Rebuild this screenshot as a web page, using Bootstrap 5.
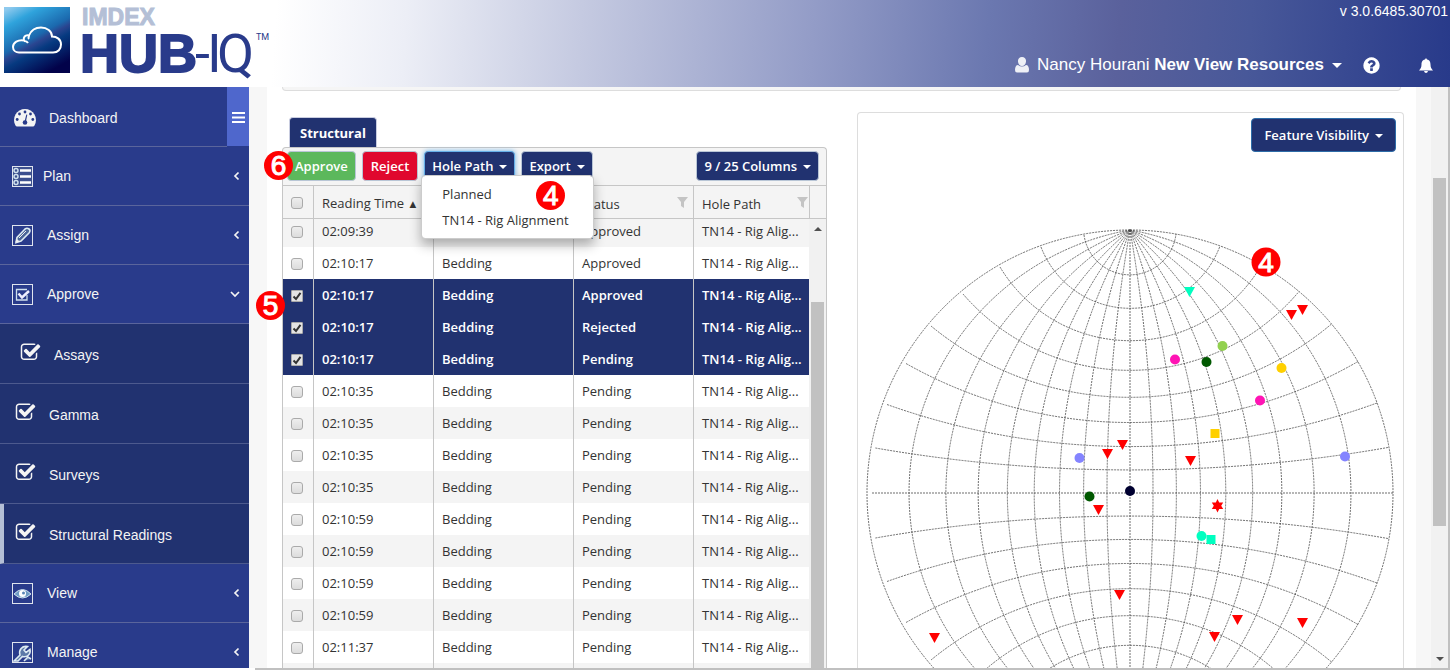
<!DOCTYPE html>
<html lang="en">
<head>
<meta charset="utf-8">
<meta name="viewport" content="width=device-width, initial-scale=1">
<title>IMDEX HUB-IQ - Structural Readings</title>
<link href="https://cdn.jsdelivr.net/npm/bootstrap@5.3.0/dist/css/bootstrap.min.css" rel="stylesheet">
<style>
:root{--navy:#213270;--blue:#293b8b;--line:#c6c6c6}
body{font-family:"Open Sans","Noto Sans",sans-serif;font-size:13px;line-height:20px;color:#333;background:#fff}
.arial{font-family:"Liberation Sans",Arial,sans-serif}
.min-h0{min-height:0}
.min-w0{min-width:0}
/* header */
.topbar{height:87px;background:linear-gradient(94deg,#fff 19%,#eceef6 28%,#c5cae1 40%,#939cc7 56%,#6b78b0 68%,#5a619c 77%,#485899 86%,#283a8a 100%);color:#fff;flex:none}
.version{font-size:14px;line-height:16px;padding:3px 2px 0 0}
.userbar{font-size:17px;line-height:20px;padding:36px 17px 0 0}
.userbar a{color:#fff;text-decoration:none}
.nbtn.dropdown-toggle::after{border-top-width:4px;border-left-width:4px;border-right-width:4px;vertical-align:2px;margin-left:6px}
.userbar .dropdown-toggle::after{border-top-width:5px;border-left-width:5px;border-right-width:5px;vertical-align:2px;margin-left:8px}
.helplink{margin-left:20px}
.belllink{margin-left:38px}
/* sidebar */
.side{width:249px;background:var(--blue);flex:none;font-size:14px}
.side a{display:flex;align-items:center;color:#f4f4f4;text-decoration:none;height:59px;border-bottom:1px solid #5a659c;padding:0 9px 0 12px;flex:none}
.side a svg{flex:none;margin-right:14px}
.side a .chev{margin:0 0 0 auto}
.side .dash{height:60px;padding:2px 0 0 14px}
.side .dash svg{margin-right:13px}
.side .plan svg:first-child{margin-right:10px}
.side .sub a{height:60px;background:var(--navy);padding:3px 0 0 15px;border-color:#4d5a8e}
.side .sub .deep{padding-left:20px}
.side .sub .on{border-left:4px solid #b4bfd6;padding-left:11px}
.side .sub svg{margin:-5px 13px 0 0}
.burger{width:22px;height:59px;background:#4f67cc;border:0;padding:0}
/* content */
.gutter{background:#f7f7f7;padding:0 15px 0 18px}
.sheet{padding:0 12px 0 15px}
.strip{height:4px;background:#f5f5f5;border:1px solid #ddd;border-top:0;border-radius:0 0 4px 4px;margin-right:3px;flex:none}
.side-cols{gap:30px}
.left-col{flex:1 1 545px;min-width:0;padding-top:26px}
.right-col{flex:1 1 547px;min-width:0}
.tabbtn{background:var(--navy);color:#fff;font-weight:700;border:1px solid #c9cde0;border-bottom:0;border-radius:4px 4px 0 0;height:30px;margin-left:7px;padding:0 10px;display:block}
.grid-box{border:1px solid var(--line);border-bottom:0;border-radius:4px 4px 0 0;background:#f4f4f4}
.tools{height:37px;padding:3px 7px 0 4px;gap:6px}
.nbtn{height:30px;padding:0 7px;font-size:13px;line-height:20px;font-weight:600;color:#fff;border-radius:4px;border:1px solid #b9c6d6}
.nbtn:hover{color:#fff}
.navyb,.navyb:hover,.navyb.show{background:var(--navy)!important;color:#fff!important}
.greenb{background:#5cb85c}
.redb{background:#e0082e;padding:0 8px}
.glow{border-color:#66afe9!important;box-shadow:0 0 5px #66afe9}
.feature{height:34px;padding:0 12px;border-color:#2d6ca8}
.pathmenu{min-width:173px;top:24px;left:-3px;padding:5px 0;border-radius:4px;box-shadow:0 6px 12px rgba(0,0,0,.3);font-size:13px;border-color:#ccc}
.pathmenu .dropdown-item{padding:3px 20px;color:#333}
.kg{table-layout:fixed;width:100%;margin:0;border-collapse:separate;border-spacing:0}
.kg th,.kg td{padding:0 0 0 8px;height:32px;border-left:1px solid var(--line);white-space:nowrap;font-weight:400;vertical-align:middle}
.kg th:first-child,.kg td:first-child{border-left:0}
.kg thead th{height:34px;border-top:1px solid var(--line);border-bottom:1px solid var(--line);padding-top:3px}
.kg tbody tr{background:#fff}
.kg tbody tr:nth-child(odd){background:#f4f4f4}
.kg tbody tr.sel{background:var(--navy);color:#fff}
.kg tbody tr.sel td{font-weight:600}
.c1{width:30px}.c2{width:120px}.c3{width:140px}.c4{width:120px}.c6{width:17px}
.rows{flex:1;min-height:0;overflow:hidden}
.rows table{margin-top:-4px}
.kg input{appearance:none;display:block;width:12px;height:12px;margin:2px 0 0 0;border:1px solid #aaa;border-radius:3px;background:linear-gradient(#eee,#dcdcdc)}
.kg thead input{margin-top:-2px}
.kg input:checked{border-radius:1px;background:#e4e4e4 url("data:image/svg+xml,%3Csvg xmlns='http://www.w3.org/2000/svg' viewBox='0 0 10 10'%3E%3Cpath d='M1.500 5.500 4 8 8.500 1.800' fill='none' stroke='%23333' stroke-width='2'/%3E%3C/svg%3E") center/10px no-repeat}
.filt{float:right;margin:3px 5px 0 0}
.filt-end{margin-right:1px}
.vtrack{width:17px;background:#f1f1f1;flex:none}
.uparrow{border:4px solid transparent;border-top:0;border-bottom-color:#505050;margin-top:8px}
.vthumb{width:13px;background:#c1c1c1;flex:1;margin-top:71px}
.plotbox{border:1px solid #ddd;border-bottom:0;border-radius:4px 4px 0 0;margin-top:21px;padding:5px 7px 0 8px;overflow:hidden}
.plot{margin-top:77px;flex:none}
.pagebar{width:19px;background:#f1f1f1;border-right:2px solid #c0c0c0;flex:none}
.pagethumb{width:13px;height:348px;background:#c1c1c1;margin-top:91px}
.downarrow{border:4px solid transparent;border-bottom:0;border-top-color:#505050;margin:auto 0 7px}
.footline{height:2px;background:#c0c0c0;margin-left:255px;flex:none}
/* numbered step markers */
.step{position:absolute;width:29px;height:29px;border-radius:50%;background:#f00;color:#fff;font:400 28px/29px "Liberation Sans",Arial,sans-serif;text-align:center;z-index:1100;-webkit-text-stroke:1px #fff}
.s6{left:-19px;top:3px}
.s5{left:-27px;top:143px}
.s4{left:114px;top:5px}
</style>
</head>
<body class="vh-100 overflow-hidden d-flex flex-column">
<svg class="d-none">
  <symbol id="chk" viewBox="0 0 1792 1792"><path fill="#f4f4f4" d="M1472 930v318q0 119-84.500 203.500t-203.500 84.500h-832q-119 0-203.500-84.500t-84.500-203.500v-832q0-119 84.500-203.500t203.500-84.500h832q63 0 117 25 15 7 18 23 3 17-9 29l-49 49q-10 10-23 10-3 0-9-2-23-6-45-6h-832q-66 0-113 47t-47 113v832q0 66 47 113t113 47h832q66 0 113-47t47-113v-254q0-13 9-22l64-64q10-10 23-10 6 0 12 3 20 8 20 29zm231-489l-814 814q-24 24-57 24t-57-24l-430-430q-24-24-24-57t24-57l110-110q24-24 57-24t57 24l263 263 647-647q24-24 57-24t57 24l110 110q24 24 24 57t-24 57z"/></symbol>
  <symbol id="left" viewBox="0 0 8 10"><path d="M6.500 1.500 3 5 6.500 8.500" fill="none" stroke="#f4f4f4" stroke-width="1.700"/></symbol>
  <symbol id="filter" viewBox="0 0 11 11"><path d="M0 0h11L7 5v6L4 9V5z" fill="#c4c4c4"/></symbol>
  <symbol id="tri" viewBox="0 0 10 9"><path d="M0 0h10L5 9z"/></symbol>
</svg>

<header class="topbar d-flex justify-content-between">
  <a href="#" aria-label="IMDEX HUB-IQ">
  <svg width="280" height="86" viewBox="0 0 280 86">
    <defs><linearGradient id="lg" x1="0.100" y1="0" x2="0.650" y2="1"><stop offset="0" stop-color="#8fcaee"/><stop offset=".2" stop-color="#2fa3dc"/><stop offset=".5" stop-color="#1b69ae"/><stop offset=".58" stop-color="#2a4590"/><stop offset=".68" stop-color="#063a80"/><stop offset="1" stop-color="#02024a"/></linearGradient></defs>
    <rect x="4" y="7" width="66" height="66" fill="url(#lg)"/>
    <path d="M19 52.500h34c5 0 8-3.500 8-8 0-5-4-8-9-8C52 31 47 27.500 41 27.500c-6 0-10 3-12 8-4-1-6 2-5 5-6-1-11 2-11 6.500 0 3.500 3 5.500 6 5.500z" fill="none" stroke="#fff" stroke-width="2"/>
    <path d="M24 41q3 0 4 2M29 36q-1 2 0 3" fill="none" stroke="#fff" stroke-width="2"/>
    <g font-family="Liberation Sans, Arial, sans-serif" font-weight="700">
      <text x="82" y="25" font-size="23" fill="#b4bfd6" stroke="#b4bfd6">IMDEX</text>
      <text x="80" y="72" font-size="54" fill="#293b8b" stroke="#293b8b" stroke-width="2">HUB</text></g>
    <g font-family="Roboto, sans-serif" fill="#293b8b">
      <text x="195 207 217" y="72" font-size="54" font-weight="400" stroke="#293b8b" stroke-width="0">-IQ</text>
      <text x="256" y="40" font-size="9">TM</text></g>
  </svg></a>
  <div class="arial text-end">
    <div class="version">v 3.0.6485.30701</div>
    <div class="userbar d-flex align-items-center justify-content-end">
      <svg width="14" height="16" viewBox="0 0 14 16" class="me-2"><path d="M7 0a4 4 0 0 1 4 4.500C11 7 9 9 7 9S3 7 3 4.500A4 4 0 0 1 7 0zM3 8q4 3 8 0c2 0 3 2 3 5q0 2.500-2 2.500H2q-2 0-2-2.500c0-3 1-5 3-5z" fill="#eef0f6"/></svg>
      <a href="#" class="dropdown-toggle">Nancy Hourani <b>New View Resources</b></a>
      <a href="#" aria-label="Help" class="helplink d-flex"><svg width="19" height="19" viewBox="0 0 1792 1792"><path fill="#fff" d="M1024 1376v-192q0-14-9-23t-23-9h-192q-14 0-23 9t-9 23v192q0 14 9 23t23 9h192q14 0 23-9t9-23zm256-672q0-88-55.500-163t-138.500-116-170-41q-243 0-371 213-15 24 8 42l132 100q7 6 19 6 16 0 25-12 53-68 86-92 34-24 86-24 48 0 85.500 26t37.500 59q0 38-20 61t-68 45q-63 28-115.500 86.500t-52.500 125.500v36q0 14 9 23t23 9h192q14 0 23-9t9-23q0-19 21.500-49.500t54.500-49.500q32-18 49-28.500t46-35 44.500-48 28-60.500 12.500-81zm384 192q0 209-103 385.500t-279.500 279.500-385.500 103-385.500-103-279.500-279.500-103-385.500 103-385.500 279.500-279.500 385.500-103 385.500 103 279.500 279.500 103 385.500z"/></svg></a>
      <a href="#" aria-label="Notifications" class="belllink d-flex"><svg width="14" height="15" viewBox="0 0 14 15"><path d="M7 0l1 1.500c3 .5 3.500 3 3.500 5 0 3 1 4.500 2.500 6H0c1.500-1.500 2.500-3 2.500-6 0-2 .5-4.500 3.500-5zM5 13h4q-.5 2-2 2t-2-2z" fill="#fff"/></svg></a>
    </div>
  </div>
</header>

<div class="d-flex flex-grow-1 min-h0">
  <nav class="side arial d-flex flex-column overflow-hidden">
    <div class="d-flex flex-shrink-0"><a href="#" class="dash flex-grow-1">
      <svg width="22" height="18" viewBox="0 0 22 18"><path d="M11 0a11 11 0 0 1 9.500 16.500q-.6 1-1.500 1H3q-.9 0-1.500-1A11 11 0 0 1 11 0z" fill="#f4f4f4"/><g fill="#293b8b"><circle cx="11" cy="3" r="1.400"/><circle cx="5.500" cy="5" r="1.400"/><circle cx="16.500" cy="5" r="1.400"/><circle cx="3.200" cy="10.500" r="1.400"/><circle cx="18.800" cy="10.500" r="1.400"/><circle cx="11" cy="13.500" r="2.300"/><path d="M12.300 5.500l1 .3-1.600 8-1.400-.3z"/></g></svg>
      Dashboard</a>
      <button class="burger" aria-label="Toggle menu"><svg width="13" height="11" viewBox="0 0 13 11"><path d="M0 1h13M0 5.500h13M0 10h13" stroke="#fff" stroke-width="2"/></svg></button></div>
    <a href="#" class="plan"><svg width="21" height="21" viewBox="0 0 21 21"><rect x=".5" y=".5" width="20" height="20" fill="#3d508f" stroke="#dfe4ee"/><path d="M8 4.500h11M8 10.500h11M8 16.500h11" stroke="#fff" stroke-width="2.500"/><g fill="none" stroke="#cfe0ee" stroke-width="1.500"><circle cx="4" cy="4.500" r="2"/><circle cx="4" cy="10.500" r="2"/><circle cx="4" cy="16.500" r="2"/></g></svg>Plan<svg class="chev" width="8" height="10"><use href="#left"/></svg></a>
    <a href="#"><svg width="21" height="21" viewBox="0 0 21 21"><rect x=".5" y=".5" width="20" height="20" fill="none" stroke="#dfe4ee"/><path d="M4 17.500l1-5L13 4q2-1.500 4 0t0 4l-8 8z" fill="#4b6699" stroke="#dceaf2" stroke-width="1.600"/><path d="M7 13l7-7M4 17l3-.5-2-2z" stroke="#eee" fill="#fff"/></svg>Assign<svg class="chev" width="8" height="10"><use href="#left"/></svg></a>
    <a href="#"><svg width="21" height="21" viewBox="0 0 21 21"><rect x=".5" y=".5" width="20" height="20" fill="none" stroke="#dfe4ee"/><path d="M15 11v5H4.500V5.500H15" fill="none" stroke="#cfe0ee" stroke-width="1.300"/><path d="M6.500 9.500l3.500 4 7-6.500" fill="none" stroke="#eef" stroke-width="2.500"/></svg>Approve<svg class="chev" width="10" height="8" viewBox="0 0 10 8"><path d="M1 2l4 4 4-4" fill="none" stroke="#f4f4f4" stroke-width="1.700"/></svg></a>
    <div class="sub">
      <a href="#" class="deep"><svg width="21" height="21"><use href="#chk"/></svg>Assays</a>
      <a href="#"><svg width="21" height="21"><use href="#chk"/></svg>Gamma</a>
      <a href="#"><svg width="21" height="21"><use href="#chk"/></svg>Surveys</a>
      <a href="#" class="on"><svg width="21" height="21"><use href="#chk"/></svg>Structural Readings</a>
    </div>
    <a href="#"><svg width="21" height="21" viewBox="0 0 21 21"><rect x=".5" y=".5" width="20" height="20" fill="none" stroke="#dfe4ee"/><path d="M2 11q8.500-9 17 0-8.500 8-17 0z" fill="#6f9cc4" stroke="#cfe0ee"/><circle cx="10.500" cy="10.500" r="3.500" fill="#fff"/><circle cx="11.500" cy="10" r="1.500" fill="#5b86b5"/></svg>View<svg class="chev" width="8" height="10"><use href="#left"/></svg></a>
    <a href="#"><svg width="21" height="21" viewBox="0 0 21 21"><rect x=".5" y=".5" width="20" height="20" fill="none" stroke="#dfe4ee"/><path d="M2 19l6-6c-1.500-5 2-9.500 7.500-8.500L12 8l2 2.500 4-3c1 5-3 8-7.500 7L6 19zM12 19l4-4 3 2" fill="#5c7aa8" stroke="#dceaf2" stroke-width="1.600"/></svg>Manage<svg class="chev" width="8" height="10"><use href="#left"/></svg></a>
  </nav>

  <main class="gutter flex-grow-1 min-w0">
    <div class="sheet bg-white h-100 d-flex flex-column">
      <div class="strip"></div>
      <div class="side-cols d-flex flex-grow-1 min-h0">
        <section class="left-col d-flex flex-column">
          <div class="d-flex"><button class="tabbtn">Structural</button></div>
          <div class="grid-box position-relative flex-grow-1 d-flex flex-column min-h0">
            <span class="step s5">5</span>
            <div class="tools d-flex position-relative">
              <span class="step s6">6</span>
              <button class="btn nbtn greenb">Approve</button>
              <button class="btn nbtn redb">Reject</button>
              <div class="position-relative">
                <button class="btn nbtn navyb glow dropdown-toggle" aria-expanded="true">Hole Path</button>
                <div class="dropdown-menu pathmenu show">
                  <a class="dropdown-item" href="#">Planned</a>
                  <a class="dropdown-item" href="#">TN14 - Rig Alignment</a>
                  <span class="step s4">4</span>
                </div>
              </div>
              <button class="btn nbtn navyb dropdown-toggle">Export</button>
              <button class="btn nbtn navyb dropdown-toggle ms-auto">9 / 25 Columns</button>
            </div>
            <table class="kg"><colgroup><col class="c1"><col class="c2"><col class="c3"><col class="c4"><col><col class="c6"></colgroup>
              <thead><tr><th><input type="checkbox" aria-label="Select all"></th><th>Reading Time <small>▲</small></th><th></th><th>Status<svg class="filt" width="11" height="11"><use href="#filter"/></svg></th><th>Hole Path<svg class="filt filt-end" width="11" height="11"><use href="#filter"/></svg></th><th></th></tr></thead></table>
            <div class="rows d-flex">
              <div class="flex-grow-1 min-w0"><table class="kg"><colgroup><col class="c1"><col class="c2"><col class="c3"><col class="c4"><col></colgroup><tbody>
                <tr><td><input type="checkbox" aria-label="Select row"></td><td>02:09:39</td><td>Bedding</td><td>Approved</td><td>TN14 - Rig Alig...</td></tr>
                <tr><td><input type="checkbox" aria-label="Select row"></td><td>02:10:17</td><td>Bedding</td><td>Approved</td><td>TN14 - Rig Alig...</td></tr>
                <tr class="sel"><td><input type="checkbox" checked aria-label="Select row"></td><td>02:10:17</td><td>Bedding</td><td>Approved</td><td>TN14 - Rig Alig...</td></tr>
                <tr class="sel"><td><input type="checkbox" checked aria-label="Select row"></td><td>02:10:17</td><td>Bedding</td><td>Rejected</td><td>TN14 - Rig Alig...</td></tr>
                <tr class="sel"><td><input type="checkbox" checked aria-label="Select row"></td><td>02:10:17</td><td>Bedding</td><td>Pending</td><td>TN14 - Rig Alig...</td></tr>
                <tr><td><input type="checkbox" aria-label="Select row"></td><td>02:10:35</td><td>Bedding</td><td>Pending</td><td>TN14 - Rig Alig...</td></tr>
                <tr><td><input type="checkbox" aria-label="Select row"></td><td>02:10:35</td><td>Bedding</td><td>Pending</td><td>TN14 - Rig Alig...</td></tr>
                <tr><td><input type="checkbox" aria-label="Select row"></td><td>02:10:35</td><td>Bedding</td><td>Pending</td><td>TN14 - Rig Alig...</td></tr>
                <tr><td><input type="checkbox" aria-label="Select row"></td><td>02:10:35</td><td>Bedding</td><td>Pending</td><td>TN14 - Rig Alig...</td></tr>
                <tr><td><input type="checkbox" aria-label="Select row"></td><td>02:10:59</td><td>Bedding</td><td>Pending</td><td>TN14 - Rig Alig...</td></tr>
                <tr><td><input type="checkbox" aria-label="Select row"></td><td>02:10:59</td><td>Bedding</td><td>Pending</td><td>TN14 - Rig Alig...</td></tr>
                <tr><td><input type="checkbox" aria-label="Select row"></td><td>02:10:59</td><td>Bedding</td><td>Pending</td><td>TN14 - Rig Alig...</td></tr>
                <tr><td><input type="checkbox" aria-label="Select row"></td><td>02:10:59</td><td>Bedding</td><td>Pending</td><td>TN14 - Rig Alig...</td></tr>
                <tr><td><input type="checkbox" aria-label="Select row"></td><td>02:11:37</td><td>Bedding</td><td>Pending</td><td>TN14 - Rig Alig...</td></tr>
                <tr><td></td><td></td><td></td><td></td><td></td></tr>
              </tbody></table></div>
              <div class="vtrack d-flex flex-column align-items-center"><span class="uparrow"></span><span class="vthumb"></span></div>
            </div>
          </div>
        </section>
        <section class="right-col plotbox d-flex flex-column">
          <div class="text-end"><button class="btn nbtn navyb feature dropdown-toggle">Feature Visibility</button></div>
          <svg class="plot w-100" height="560" viewBox="-264 -264 530 560" preserveAspectRatio="xMidYMin meet">
            <defs>
              <path id="half" d="M-46-258A46.400 46.400 0 0 0 46-259M-89-246A95.700 95.700 0 0 0 90-247M-130-226A151.800 151.800 0 0 0 131.500-228M-167-199A220.700 220.700 0 0 0 169-201.500M-199-167A313.400 313.400 0 0 0 201.500-169M-224-129.500A455.500 455.500 0 0 0 228-131.500M-243-88.500A722.600 722.600 0 0 0 247-90M-254.600-45A1491.500 1491.500 0 0 0 259-45.700"/>
              <path id="mer" d="M0-263A1515 1515 0 0 1 0 263M0-263A769 769 0 0 1 0 263M0-263A526 526 0 0 1 0 263M0-263A409 409 0 0 1 0 263M0-263A343.300 343.300 0 0 1 0 263M0-263A303.700 303.700 0 0 1 0 263M0-263A279.900 279.900 0 0 1 0 263M0-263A267 267 0 0 1 0 263M0-263A263 263 0 0 1 0 263"/>
            </defs>
            <g fill="none" stroke="#4a4a4a" stroke-opacity=".8" stroke-dasharray="2 1">
              <use href="#half"/><use href="#half" transform="scale(1 -1)"/>
              <use href="#mer"/><use href="#mer" transform="scale(-1 1)"/>
              <path d="M-258 0H263M0-263V263"/>
            </g>
            <g transform="translate(-1130 -493)">
              <circle cx="1175" cy="359.500" r="5" fill="#ff14b4"/><circle cx="1260" cy="400.500" r="5" fill="#ff14b4"/>
              <circle cx="1206.500" cy="362" r="5" fill="#005800"/><circle cx="1089.500" cy="496.500" r="5" fill="#005800"/>
              <circle cx="1222.500" cy="346" r="5" fill="#92d14f"/><circle cx="1281.500" cy="368" r="5" fill="#ffd000"/>
              <circle cx="1079.500" cy="458" r="5" fill="#8484ff"/><circle cx="1345" cy="456.500" r="5" fill="#8484ff"/>
              <circle cx="1130" cy="491" r="5" fill="#000030"/><circle cx="1201.500" cy="536" r="5" fill="#00ffc0"/>
              <path d="M1206.500 535h9v9h-9z" fill="#00ffc0"/><path d="M1210.500 429h9v9h-9z" fill="#ffd000"/>
              <use href="#tri" x="1184" y="287" width="11" height="10" fill="#00ffc0"/>
              <g fill="#f00">
                <use href="#tri" x="1286" y="310" width="11" height="10"/><use href="#tri" x="1297" y="305" width="11" height="10"/>
                <use href="#tri" x="1117" y="440" width="11" height="10"/><use href="#tri" x="1102" y="449" width="11" height="10"/>
                <use href="#tri" x="1185" y="456" width="11" height="10"/><use href="#tri" x="1093" y="505" width="11" height="10"/>
                <use href="#tri" x="1114" y="590" width="11" height="10"/><use href="#tri" x="929" y="633" width="11" height="10"/>
                <use href="#tri" x="1232" y="615" width="11" height="10"/><use href="#tri" x="1209" y="632" width="11" height="10"/>
                <use href="#tri" x="1297" y="618" width="11" height="10"/>
                <path d="M1217.500 499l1.700 3.500h4l-2 3.200 2 3.300h-4l-1.700 3.500-1.700-3.500h-4l2-3.300-2-3.200h4z"/>
                <circle cx="1266" cy="262" r="14.500"/>
              </g>
              <text x="1266" y="272" text-anchor="middle" font-size="28" fill="#fff" stroke="#fff" font-family="Liberation Sans, Arial, sans-serif">4</text>
            </g>
          </svg>
        </section>
      </div>
    </div>
  </main>
  <div class="pagebar d-flex flex-column align-items-center"><span class="pagethumb"></span><span class="downarrow"></span></div>
</div>
<div class="footline"></div>
<script src="https://cdn.jsdelivr.net/npm/bootstrap@5.3.0/dist/js/bootstrap.bundle.min.js"></script>
</body>
</html>
